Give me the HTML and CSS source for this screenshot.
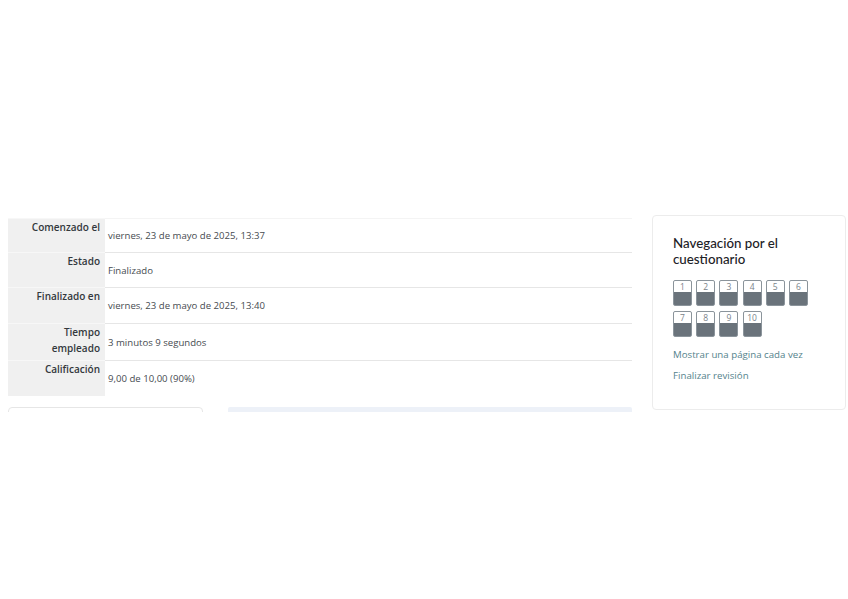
FILE: index.html
```html
<!DOCTYPE html>
<html lang="es">

<head>
  <meta charset="UTF-8">
  <meta name="viewport" content="width=device-width, initial-scale=1.0">
  <title>Revisión del intento</title>
  <link rel="stylesheet" href="styles.css">
</head>

<body>
  <div class="page">
    <main class="region-main">
      <table class="summary">
        <tr class="r1">
          <th>Comenzado el</th>
          <td>viernes, 23 de mayo de 2025, 13:37</td>
        </tr>
        <tr class="r2">
          <th>Estado</th>
          <td>Finalizado</td>
        </tr>
        <tr class="r3">
          <th>Finalizado en</th>
          <td>viernes, 23 de mayo de 2025, 13:40</td>
        </tr>
        <tr class="r4">
          <th>Tiempo empleado</th>
          <td>3 minutos 9 segundos</td>
        </tr>
        <tr class="r5">
          <th>Calificación</th>
          <td>9,00 de 10,00 (90%)</td>
        </tr>
      </table>

      <div class="below">
        <div class="info-card"></div>
        <div class="alert"></div>
      </div>
    </main>

    <aside class="quiz-nav">
      <h2>Navegación por el cuestionario</h2>
      <div class="buttons">
        <a class="qbtn"><span>1</span></a>
        <a class="qbtn"><span>2</span></a>
        <a class="qbtn"><span>3</span></a>
        <a class="qbtn"><span>4</span></a>
        <a class="qbtn"><span>5</span></a>
        <a class="qbtn"><span>6</span></a>
        <a class="qbtn"><span>7</span></a>
        <a class="qbtn"><span>8</span></a>
        <a class="qbtn"><span>9</span></a>
        <a class="qbtn"><span>10</span></a>
      </div>
      <a class="nav-link" href="#">Mostrar una página cada vez</a>
      <a class="nav-link" href="#">Finalizar revisión</a>
    </aside>
  </div>
</body>

</html>
```

FILE: styles.css
```css
body {
  margin: 0;
  background: #fff;
  color: #1d2125;
  font-family: "Open Sans", "Noto Sans", sans-serif;
}

.page {
  display: flex;
  gap: 20px;
  padding: 215px 2px 0 8px;
  align-items: flex-start;
}

.region-main {
  width: 624px;
  padding-top: 3px;
}

.summary {
  width: 100%;
  border-collapse: collapse;

  th {
    width: 97px;
    box-sizing: border-box;
    background: #f0f0f0;
    border-top: 1px solid #f7f7f7;
    color: #33383d;
    font-size: 10px;
    font-weight: 600;
    line-height: 16px;
    padding: 0 5px 0 14px;
    text-align: right;
    vertical-align: top;
  }

  td {
    border-top: 1px solid #e6e6e6;
    color: #464b50;
    font-size: 9.6px;
    padding: 0 3px;
    vertical-align: middle;
  }

  .r1 td { border-top-color: #f4f4f4; }
  .r1 { height: 34px; }
  .r2 { height: 35px; }
  .r3 { height: 36px; }
  .r4 { height: 37px; }
  .r5 { height: 35px; }
}

.below {
  display: flex;
  gap: 25px;
  height: 5px;
  margin-top: 11px;
  overflow: hidden;

  .info-card {
    width: 195px;
    height: 40px;
    box-sizing: border-box;
    border: 1px solid #e6e6e6;
    border-radius: 4px;
  }

  .alert {
    flex: 1;
    height: 40px;
    background: #edf1f8;
    border-radius: 2px;
  }
}

.quiz-nav {
  width: 194px;
  height: 195px;
  box-sizing: border-box;
  border: 1px solid #ececec;
  border-radius: 4px;
  padding: 19px 20px;

  h2 {
    margin: 0 0 13px;
    font-family: "Lato", "Open Sans", sans-serif;
    font-size: 13.3px;
    font-weight: 500;
    line-height: 16px;
    color: #1d2125;
  }

  .buttons {
    display: flex;
    flex-wrap: wrap;
    gap: 5px 4.2px;
    width: 140px;
  }

  .qbtn {
    width: 19px;
    height: 26px;
    box-sizing: border-box;
    border: 1px solid #8b949b;
    border-radius: 2px;
    background: linear-gradient(#fff 0 46%, #6a737b 46% 100%);

    span {
      display: block;
      color: #7a838a;
      font-size: 8.5px;
      line-height: 11px;
      text-align: center;
    }
  }

  .nav-link {
    display: block;
    margin-top: 7px;
    color: #55838c;
    font-size: 9.7px;
    line-height: 14px;
    text-decoration: none;
  }

  .buttons + .nav-link {
    margin-top: 11px;
  }
}
```
